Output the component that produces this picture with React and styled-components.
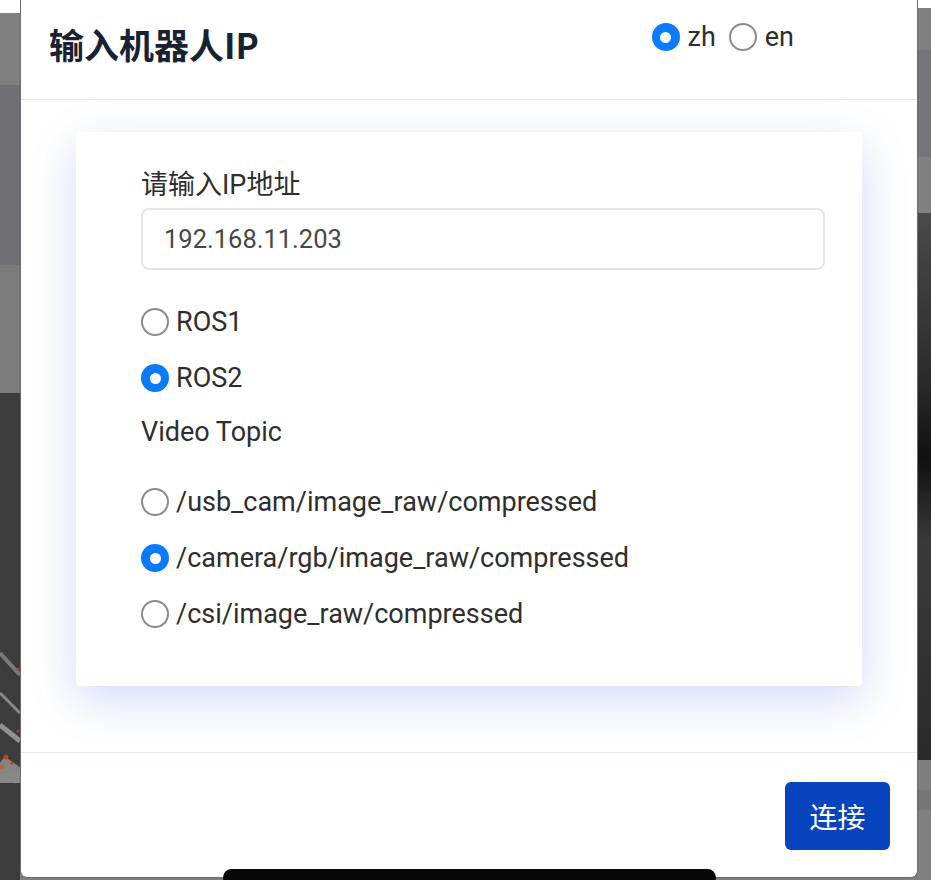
import React from 'react';
import styled, { createGlobalStyle } from 'styled-components';

const GlobalStyle = createGlobalStyle`
  html, body {
    margin: 0;
    padding: 0;
    background: #7f7f7f;
  }
  * {
    box-sizing: border-box;
  }
`;

const Screen = styled.div`
  position: relative;
  width: 931px;
  height: 880px;
  display: flex;
  overflow: hidden;
  font-family: Roboto, "Noto Sans CJK SC", sans-serif;
`;

const Strip = styled.div`
  width: ${(p) => p.$w}px;
  flex: none;
  display: flex;
  flex-direction: column;
`;

const Band = styled.div`
  height: ${(p) => (p.$h ? `${p.$h}px` : 'auto')};
  flex: ${(p) => (p.$h ? 'none' : '1')};
  background: ${(p) => p.$bg};
  overflow: hidden;
`;

const Modal = styled.div`
  width: 898px;
  height: 878px;
  flex: none;
  background: #fff;
  border: 1px solid #6a6a6a;
  border-top: none;
  border-radius: 0 0 7px 7px;
  display: flex;
  flex-direction: column;
`;

const Header = styled.div`
  height: 100px;
  flex: none;
  display: flex;
  align-items: flex-start;
  padding: 23px 123px 0 28px;
  border-bottom: 1px solid #e6e7ef;
`;

const Title = styled.h1`
  margin: 0;
  font-family: "Noto Sans CJK SC", sans-serif;
  font-size: 35px;
  line-height: 42px;
  font-weight: 700;
  color: #192233;
`;

const LangGroup = styled.div`
  margin-left: auto;
  margin-top: -2px;
  display: flex;
  align-items: center;
  gap: 13px;
`;

const Body = styled.div`
  flex: 1;
  padding: 32px 55px 66px 55px;
  border-bottom: 1px solid #e6e7ef;
`;

const Card = styled.div`
  height: 554px;
  background: #fff;
  border-radius: 4px;
  padding: 38px 37px 0 65px;
  box-shadow: 0 14px 46px rgba(70, 100, 225, 0.24);
`;

const FieldLabel = styled.div`
  font-size: 27px;
  line-height: 30px;
  color: #2e2e2e;
  margin-bottom: 8px;
`;

const IpInput = styled.div`
  height: 62px;
  border: 2px solid #e4e6eb;
  border-radius: 8px;
  padding: 0 21px;
  display: flex;
  align-items: center;
  font-size: 25.5px;
  color: #474747;
  margin-bottom: 24px;
`;

const Option = styled.label`
  height: ${(p) => (p.$compact ? 'auto' : '56px')};
  display: flex;
  align-items: center;
  gap: ${(p) => (p.$compact ? '8px' : '7px')};
  font-size: 27px;
  color: #2e2e2e;
`;

const Radio = styled.span`
  width: 28px;
  height: 28px;
  flex: none;
  border-radius: 50%;
  display: flex;
  align-items: center;
  justify-content: center;
  background: ${(p) => (p.$checked ? '#0b7bfd' : '#fff')};
  border: ${(p) => (p.$checked ? 'none' : '2.5px solid #8b8b8b')};

  &::after {
    content: '';
    display: ${(p) => (p.$checked ? 'block' : 'none')};
    width: 11px;
    height: 11px;
    border-radius: 50%;
    background: #fff;
  }
`;

const SectionTitle = styled.div`
  height: 52px;
  display: flex;
  align-items: center;
  font-size: 27px;
  color: #2e2e2e;
  margin-bottom: 16px;
`;

const Footer = styled.div`
  height: 125px;
  flex: none;
  display: flex;
  justify-content: flex-end;
  align-items: flex-start;
  padding: 29px 27px 0 0;
`;

const ConnectButton = styled.button`
  width: 105px;
  height: 68px;
  border: none;
  border-radius: 6px;
  background: #0744bd;
  color: #fff;
  font-family: "Noto Sans CJK SC", sans-serif;
  font-size: 28px;
  cursor: pointer;
`;

const HomeBar = styled.div`
  position: absolute;
  left: 223px;
  bottom: -6px;
  width: 493px;
  height: 17px;
  border-radius: 9px;
  background: #070707;
`;

const MapSketch = () => (
  <svg width="20" height="220" viewBox="0 0 20 220">
    <path d="M0 40 L20 62" stroke="#7a7a7a" strokeWidth="4" />
    <path d="M0 80 L20 100" stroke="#8a8a8a" strokeWidth="3" />
    <path d="M0 112 L20 128" stroke="#909090" strokeWidth="5" />
    <path d="M0 150 L20 164" stroke="#858585" strokeWidth="16" />
    <rect x="0" y="160" width="20" height="10" fill="#888" />
    <circle cx="18" cy="56" r="1.5" fill="#b8401a" />
    <circle cx="18" cy="118" r="1.5" fill="#b8401a" />
    <circle cx="6" cy="144" r="2.5" fill="#c2451c" />
    <circle cx="2" cy="154" r="2" fill="#d0562a" />
    <circle cx="12" cy="150" r="1.5" fill="#c2451c" />
  </svg>
);

const protocols = [
  { id: 'ros1', label: 'ROS1', checked: false },
  { id: 'ros2', label: 'ROS2', checked: true },
];

const topics = [
  { id: 'usb', label: '/usb_cam/image_raw/compressed', checked: false },
  { id: 'rgb', label: '/camera/rgb/image_raw/compressed', checked: true },
  { id: 'csi', label: '/csi/image_raw/compressed', checked: false },
];

const App = () => {
  return (
    <>
      <GlobalStyle />
      <Screen>
        <Strip $w={20}>
          <Band $h={13} $bg="#ffffff" />
          <Band $h={72} $bg="#808080" />
          <Band $h={180} $bg="#707075" />
          <Band $h={128} $bg="#7b7b7b" />
          <Band $h={220} $bg="#3c3c3c" />
          <Band $bg="#3c3c3c">
            <MapSketch />
          </Band>
        </Strip>

        <Modal>
          <Header>
            <Title>输入机器人IP</Title>
            <LangGroup>
              <Option $compact>
                <Radio $checked />
                zh
              </Option>
              <Option $compact>
                <Radio />
                en
              </Option>
            </LangGroup>
          </Header>

          <Body>
            <Card>
              <FieldLabel>请输入IP地址</FieldLabel>
              <IpInput>192.168.11.203</IpInput>
              {protocols.map((p) => (
                <Option key={p.id}>
                  <Radio $checked={p.checked} />
                  {p.label}
                </Option>
              ))}
              <SectionTitle>Video Topic</SectionTitle>
              {topics.map((t) => (
                <Option key={t.id}>
                  <Radio $checked={t.checked} />
                  {t.label}
                </Option>
              ))}
            </Card>
          </Body>

          <Footer>
            <ConnectButton>连接</ConnectButton>
          </Footer>
        </Modal>

        <Strip $w={13}>
          <Band $h={8} $bg="#ffffff" />
          <Band $h={42} $bg="#808080" />
          <Band $h={107} $bg="#75757a" />
          <Band $h={56} $bg="#808080" />
          <Band $h={547} $bg="linear-gradient(180deg, #4a4a4a 0%, #2c2c2c 30%, #111 45%, #3a3a3a 60%, #2a2a2a 100%)" />
          <Band $h={30} $bg="#7f7f7f" />
          <Band $h={20} $bg="#75757a" />
          <Band $bg="#808080" />
        </Strip>

        <HomeBar />
      </Screen>
    </>
  );
};

export default App;
